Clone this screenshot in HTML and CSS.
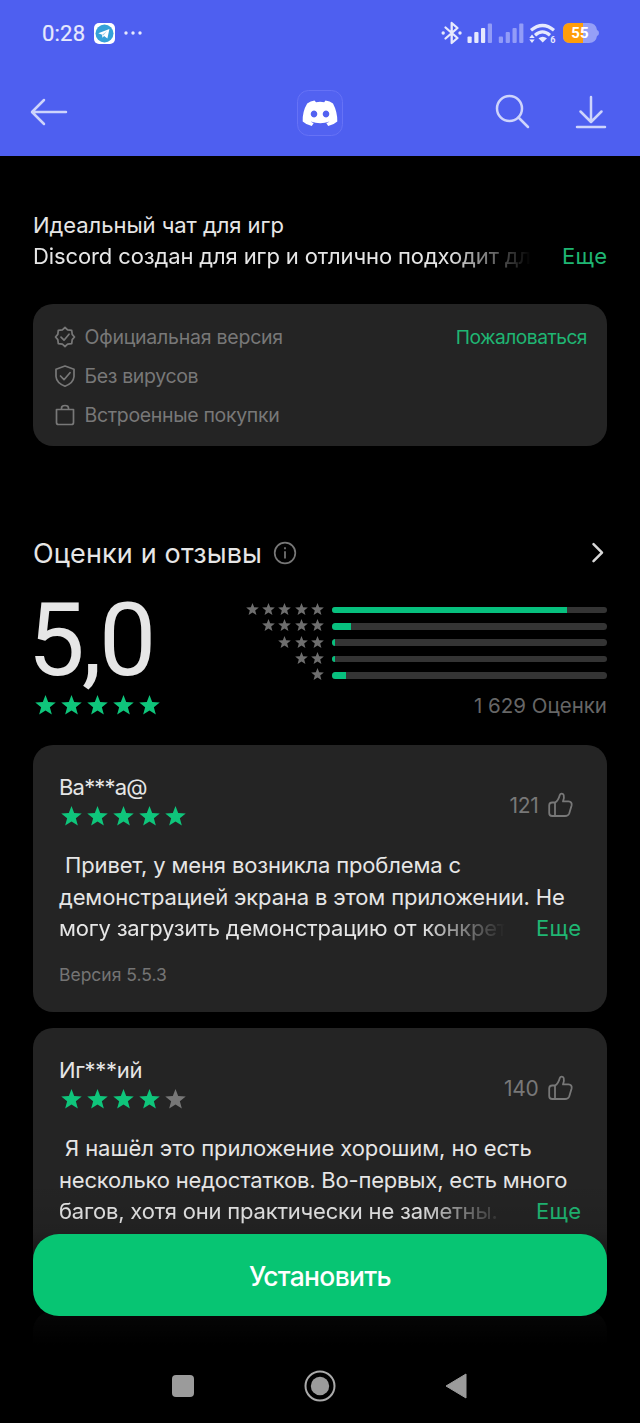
FILE: index.html
```html
<!DOCTYPE html>
<html lang="ru">
<head>
<meta charset="utf-8">
<title>Discord</title>
<link rel="stylesheet" href="styles.css">
</head>
<body>
<svg class="defs" width="0" height="0">
  <symbol id="star" viewBox="0 0 20 20"><path d="M10 0l2.55 6.7 7.2.4-5.6 4.5 1.9 7-6.05-3.95-6.05 3.95 1.9-7L.25 7.1l7.2-.4z"/></symbol>
  <symbol id="thumb" viewBox="0 0 26 26"><path d="M8 10.500H5.200Q2.200 10.500 2.200 13.500V21Q2.200 24 5.200 24H18Q21.300 24 22.200 21.500L24.600 13.500Q25.300 9.800 21.500 9.400H16C17 6.500 17.300 4.800 16.700 3C15.900 1 13.400 1.200 12.800 3C12 6 11 9 8 10.500V24"/></symbol>
</svg>
<div class="screen">
  <header class="header">
    <div class="status">
      <span class="time">0:28</span>
      <svg class="telegram" width="21" height="21" viewBox="0 0 21 21"><rect width="21" height="21" rx="5" fill="#fff"/><circle cx="10.500" cy="10.500" r="9" fill="#35a1d8"/><path d="M4.300 10.300L15.400 6l-2 9.600-3.300-2.500-1.700 1.700-.3-3z" fill="#fff"/><path d="M8.100 11.800l5-3.900-3.800 4.500" fill="#9ccfe9"/></svg>
      <svg class="more" width="18" height="4" viewBox="0 0 18 4" fill="#e6e9fd"><circle cx="2" cy="2" r="1.700"/><circle cx="9" cy="2" r="1.700"/><circle cx="16" cy="2" r="1.700"/></svg>
      <svg class="signals" width="160" height="26" viewBox="440 20 160 26">
        <g stroke="#e6e9fd" stroke-width="2.300" fill="none" stroke-linejoin="round" stroke-linecap="round"><path d="M445.500 27.500L457.500 38 451.700 43V23L457.500 28 445.500 38.500"/></g>
        <g fill="#e6e9fd"><circle cx="443.200" cy="33" r="1.700"/><circle cx="460" cy="33" r="1.700"/>
        <rect x="467.500" y="36.500" width="4.200" height="6.500" rx="1"/><rect x="474.300" y="32" width="4.200" height="11" rx="1"/><rect x="481" y="28" width="4.200" height="15" rx="1"/></g>
        <g fill="#929cf8"><rect x="487.800" y="23.500" width="4.200" height="19.500" rx="1"/><rect x="498.800" y="36.500" width="4.200" height="6.500" rx="1"/><rect x="505.700" y="32" width="4.200" height="11" rx="1"/><rect x="512.500" y="28" width="4.200" height="15" rx="1"/><rect x="519.200" y="23.500" width="4.200" height="19.500" rx="1"/></g>
        <path d="M531 30.200Q542.500 20.800 554 30.200M535 35.200Q542.500 28.600 550 35.200" fill="none" stroke="#e6e9fd" stroke-width="3.200"/>
        <path d="M538.500 38.300Q542.700 35 547 38.300L542.700 42.400zM529.300 37.900L532 34.500l2.700 3.400zM529.300 39.400h5.400L532 43z" fill="#e6e9fd"/>
        <text x="550.300" y="43.200" class="wifi-gen">6</text>
        <path d="M570 23h19q7 0 8 7 2 .5 2 3t-2 3q-1 7-8 7h-19q-7 0-7-7v-6q0-7 7-7z" fill="#959ff7"/>
        <path d="M570 23h13v20h-13q-7 0-7-7v-6q0-7 7-7z" fill="#ff9d0a"/>
        <text x="571.300" y="38.400" class="battery-level">55</text>
      </svg>
    </div>
    <nav class="toolbar">
      <svg class="back" width="38" height="28" viewBox="0 0 38 28"><path d="M14 2L2 14l12 12M2.500 14H36"/></svg>
      <svg class="logo" width="46" height="46" viewBox="0 0 46 46"><rect x=".5" y=".5" width="45" height="45" rx="11" fill="#5865f2" fill-opacity=".45" stroke="#6672f6"/><path fill="#fff" fill-rule="evenodd" d="M17.500 10.500L19 12.200Q23 11.500 27.200 12.200L28.500 10.500Q33 11.200 36 13.500Q40.500 22 40.300 31.500Q36.500 35 31.200 36L29.300 33Q31 32.500 32.500 31.500Q23.500 35 13.700 31.500Q15 32.500 16.700 33L14.800 36Q9.500 35 5.700 31.500Q5.300 21.500 10.200 13.500Q13.500 11.200 17.500 10.500zM17 20.500a3.300 3.500 0 1 0 .01 0zM29 20.500a3.300 3.500 0 1 0 .01 0z"/></svg>
      <svg class="search" width="36" height="36" viewBox="0 0 36 36"><circle cx="14.500" cy="14.500" r="12.500"/><path d="M23.500 23.500L33 33"/></svg>
      <svg class="download" width="32" height="34" viewBox="0 0 32 34"><path d="M16 2v24M5.500 16.500L16 27l10.500-10.500M2 32h28"/></svg>
    </nav>
  </header>

  <main class="content">
    <section class="about">
      <p class="line l-about1">Идеальный чат для игр</p>
      <p class="line clipped"><span class="fade l-about2">Discord создан для игр и отлично подходит дл</span><a class="more-link">Еще</a></p>
    </section>

    <section class="badges">
      <div class="badge"><svg width="22" height="22" viewBox="0 0 22 22"><path d="M11 1.500L13.600 3.800 17.700 4.300 18.200 8.400 20.500 11 18.200 13.600 17.700 17.700 13.600 18.200 11 20.500 8.400 18.200 4.300 17.700 3.800 13.600 1.500 11 3.800 8.400 4.300 4.300 8.400 3.800zM7 11.200l3 3 5-6"/></svg><span class="l-b1">Официальная версия</span><a class="report">Пожаловаться</a></div>
      <div class="badge"><svg width="22" height="22" viewBox="0 0 22 22"><path d="M11 1L20 4.200V11.500Q19.500 18 11 21.200Q2.500 18 2 11.500V4.200zM6.500 11l3.500 3.700 6-7"/></svg><span class="l-b2">Без вирусов</span></div>
      <div class="badge"><svg width="22" height="22" viewBox="0 0 22 22"><path d="M2.500 5.500h17v13q0 2-2 2h-13q-2 0-2-2zM7.500 5V4q0-2.500 3.500-2.500T14.500 4v1"/></svg><span class="l-b3">Встроенные покупки</span></div>
    </section>

    <section class="ratings">
      <div class="heading">
        <h2 class="title">Оценки и отзывы</h2>
        <svg class="info" width="24" height="24" viewBox="0 0 24 24"><circle cx="12" cy="12" r="10.300"/><path d="M12 10.300v7.200M12 6.200v2"/></svg>
        <svg class="chevron" width="14" height="24" viewBox="0 0 14 24"><path d="M2.500 3.200L11 11.700l-8.500 8.500"/></svg>
      </div>
      <div class="summary">
        <div class="score">5,0</div>
        <div class="histogram">
          <div class="row"><span class="mini"><svg><use href="#star"/></svg><svg><use href="#star"/></svg><svg><use href="#star"/></svg><svg><use href="#star"/></svg><svg><use href="#star"/></svg></span><span class="bar"><i style="width:85.400%"></i></span></div>
          <div class="row"><span class="mini"><svg><use href="#star"/></svg><svg><use href="#star"/></svg><svg><use href="#star"/></svg><svg><use href="#star"/></svg></span><span class="bar"><i style="width:7%"></i></span></div>
          <div class="row"><span class="mini"><svg><use href="#star"/></svg><svg><use href="#star"/></svg><svg><use href="#star"/></svg></span><span class="bar"><i style="width:1.200%"></i></span></div>
          <div class="row"><span class="mini"><svg><use href="#star"/></svg><svg><use href="#star"/></svg></span><span class="bar"><i style="width:1.200%"></i></span></div>
          <div class="row"><span class="mini"><svg><use href="#star"/></svg></span><span class="bar"><i style="width:5.200%"></i></span></div>
        </div>
      </div>
      <div class="totals">
        <span class="stars"><svg><use href="#star"/></svg><svg><use href="#star"/></svg><svg><use href="#star"/></svg><svg><use href="#star"/></svg><svg><use href="#star"/></svg></span>
        <span class="count">1 629 Оценки</span>
      </div>
    </section>

    <article class="card">
      <div class="card-head">
        <div class="author"><div class="name l-n1">Ва***а@</div><span class="stars"><svg><use href="#star"/></svg><svg><use href="#star"/></svg><svg><use href="#star"/></svg><svg><use href="#star"/></svg><svg><use href="#star"/></svg></span></div>
        <div class="likes"><span>121</span><svg width="26" height="26"><use href="#thumb"/></svg></div>
      </div>
      <div class="review">
        <p class="line first l-r1">Привет, у меня возникла проблема с</p>
        <p class="line l-r2">демонстрацией экрана в этом приложении. Не</p>
        <p class="line clipped"><span class="fade l-r3">могу загрузить демонстрацию от конкрет</span><a class="more-link">Еще</a></p>
      </div>
      <div class="version">Версия 5.5.3</div>
    </article>

    <article class="card">
      <div class="card-head">
        <div class="author"><div class="name l-n2">Иг***ий</div><span class="stars"><svg><use href="#star"/></svg><svg><use href="#star"/></svg><svg><use href="#star"/></svg><svg><use href="#star"/></svg><svg class="off"><use href="#star"/></svg></span></div>
        <div class="likes"><span>140</span><svg width="26" height="26"><use href="#thumb"/></svg></div>
      </div>
      <div class="review">
        <p class="line first l-r4">Я нашёл это приложение хорошим, но есть</p>
        <p class="line l-r5">несколько недостатков. Во-первых, есть много</p>
        <p class="line clipped"><span class="fade l-r6">багов, хотя они практически не заметны.</span><a class="more-link">Еще</a></p>
      </div>
    </article>
    <article class="card"></article>
  </main>

  <footer class="bottom">
    <button class="install">Установить</button>
    <div class="system-nav">
      <svg width="34" height="34" viewBox="0 0 34 34"><rect x="6" y="6" width="22" height="22" rx="4" fill="#9b9b9b"/></svg>
      <svg width="34" height="34" viewBox="0 0 34 34"><circle cx="17" cy="17" r="14.500" fill="none" stroke="#aaa" stroke-width="2"/><circle cx="17" cy="17" r="9.200" fill="#9b9b9b"/></svg>
      <svg width="34" height="34" viewBox="0 0 34 34"><path d="M6 17L26 5v24z" fill="#9b9b9b" stroke="#9b9b9b" stroke-linejoin="round"/></svg>
    </div>
  </footer>
</div>
</body>
</html>
```
FILE: styles.css
```css
* { box-sizing: border-box; }
body { margin: 0; background: #000; }
p, h2 { margin: 0; }
svg { display: block; flex: none; }
.defs { position: absolute; }
.screen {
  position: relative;
  width: 640px;
  height: 1423px;
  overflow: hidden;
  background: #000;
  color: #e6e6e6;
  font-family: Inter, "Noto Sans", sans-serif;
  font-size: 22px;
}
.header { height: 156px; background: #4e5ff0; }
.status { display: flex; align-items: center; height: 66px; padding: 0 40px 0 42px; }
.time { width: 52px; padding-top: 1px; font: 400 22px/26px Roboto, sans-serif; color: #e6e9fd; letter-spacing: .2px; -webkit-text-stroke: .2px #e6e9fd; }
.more { margin-left: 9px; }
.signals { margin-left: auto; }
.wifi-gen { font: 700 9px Roboto, sans-serif; fill: #e6e9fd; }
.battery-level { font: 700 15px Roboto, sans-serif; fill: #fff; }
.toolbar { display: grid; grid-template-columns: 38px 1fr 36px 32px; align-items: center; height: 92px; padding: 0 33px 0 29.500px; }
.toolbar .logo { margin: 1px 0 0 229.500px; }
.toolbar .search { margin-left: -44.500px; }
.toolbar .back, .toolbar .search, .toolbar .download { fill: none; stroke: #ced4fc; stroke-width: 2.500; stroke-linecap: round; stroke-linejoin: round; }

.content { padding: 0 33px; }
.line { height: 31.500px; line-height: 31.500px; white-space: pre; }
.about { padding-top: 53.500px; }
.clipped { display: flex; justify-content: space-between; }
.fade {
  width: 500px;
  -webkit-mask-image: linear-gradient(to right, #000 calc(100% - 85px), transparent calc(100% - 2px));
  mask-image: linear-gradient(to right, #000 calc(100% - 85px), transparent calc(100% - 2px));
}
.more-link { margin-right: -.4px; color: #1fb673; letter-spacing: .4px; }
.l-about1 { letter-spacing: -.05px; }
.l-about2 { letter-spacing: -.12px; }
.l-b1 { letter-spacing: -.24px; }
.l-b2 { letter-spacing: -.35px; }
.l-b3 { letter-spacing: -.33px; }
.l-n1 { letter-spacing: -.8px; }
.l-n2 { letter-spacing: -.3px; }
.l-r1, .l-r2 { letter-spacing: -.15px; }
.l-r3 { letter-spacing: -.19px; }
.l-r4 { letter-spacing: -.08px; }
.l-r5, .l-r6 { letter-spacing: -.2px; }

.badges { height: 142px; margin-top: 31.500px; padding: 13.500px 20px 0 21px; border-radius: 20px; background: #242424; }
.badge { display: flex; align-items: center; gap: 8.500px; height: 39px; font-size: 19.500px; color: #787878; white-space: nowrap; }
.badge svg { fill: none; stroke: #787878; stroke-width: 1.700; stroke-linejoin: round; stroke-linecap: round; }
.report { margin-left: auto; color: #1fb673; font-size: 19.200px; letter-spacing: -.5px; }

.ratings { padding-top: 87px; }
.heading { display: flex; align-items: center; height: 40px; }
.title { width: 229px; font-size: 27px; font-weight: 400; line-height: 41px; letter-spacing: .15px; white-space: nowrap; }
.info { margin-left: 11px; fill: none; stroke: #777; stroke-width: 1.700; }
.chevron { margin: 0 2px 0 auto; fill: none; stroke: #d8d8d8; stroke-width: 2.500; stroke-linecap: round; stroke-linejoin: round; }
.summary { display: flex; justify-content: space-between; height: 119px; }
.score { height: 119px; margin-left: -5.500px; font: 400 102px/134px Roboto, sans-serif; letter-spacing: -3px; }
.histogram { display: flex; flex-direction: column; width: 363px; padding-top: 29px; }
.row { display: flex; align-items: center; justify-content: flex-end; gap: 7.500px; height: 16.300px; }
.mini { display: flex; gap: 3.300px; margin-top: -1px; }
.mini svg { width: 13px; height: 13px; fill: #6e6e6e; }
.bar { display: block; width: 275.500px; height: 6.500px; border-radius: 4px; overflow: hidden; background: #343434; }
.bar i { display: block; height: 100%; background: #07c07e; }
.totals { display: flex; align-items: center; justify-content: space-between; height: 27px; }
.stars { display: flex; gap: 5px; padding-left: 2.300px; }
.stars svg { width: 21px; height: 21px; fill: #0fc57b; }
.stars .off { fill: #777; }
.count { font-size: 20.500px; color: #666; white-space: nowrap; }

.card { height: 267px; margin-bottom: 16px; padding: 26px 26px 0; border-radius: 20px; background: #242424; }
.ratings + .card { margin-top: 26px; }
.card-head { display: flex; justify-content: space-between; height: 79px; }
.name { height: 32px; line-height: 32px; }
.author .stars { padding-top: 3px; }
.likes { display: flex; align-items: center; gap: 8px; height: 68px; padding-right: 8.500px; font-size: 21px; letter-spacing: -.3px; color: #787878; }
.likes svg { fill: none; stroke: #787878; stroke-width: 1.800; stroke-linejoin: round; }
.first { padding-left: 6px; }
.review .fade { width: 448px; }
.version { height: 28px; margin-top: 16px; font-size: 17.500px; line-height: 28px; color: #747474; }

.bottom {
  position: absolute;
  left: 0;
  right: 0;
  bottom: 0;
  height: 243px;
  padding: 54px 33px 0;
  background: linear-gradient(to bottom, rgba(0,0,0,0) 0, rgba(0,0,0,.08) 50px, rgba(0,0,0,.85) 134px, #000 165px);
}
.install { display: block; width: 574px; height: 82px; padding: 0; border: 0; border-radius: 26px; background: #07c573; color: #fff; font: 500 26.500px/84px Inter, "Noto Sans", sans-serif; letter-spacing: -.7px; }
.system-nav { display: flex; justify-content: center; gap: 103px; margin-top: 53px; }
```
